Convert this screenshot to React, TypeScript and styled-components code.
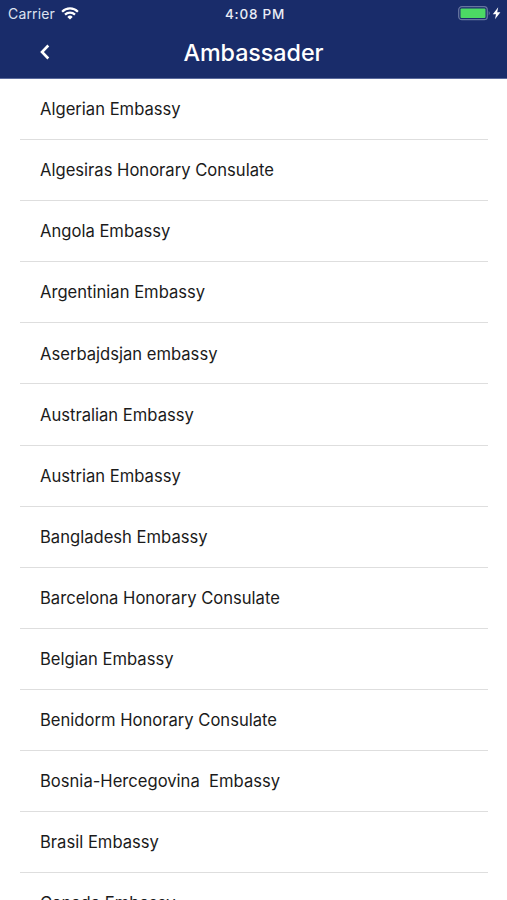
import React from "react";
import styled, { createGlobalStyle } from "styled-components";

const GlobalStyle = createGlobalStyle`
  * { box-sizing: border-box; }
  body { margin: 0; background: #fff; overflow: hidden; }
`;

const Screen = styled.main`
  width: 100%;
  height: 900px;
  overflow: hidden;
  background: #fff;
  font-family: Inter, "Liberation Sans", sans-serif;
`;

const Header = styled.header`
  height: 79px;
  background: #192c6a;
  color: #fff;
  border-bottom: 1px solid #5a6a9c;
`;

const StatusBar = styled.div`
  height: 27px;
  display: grid;
  grid-template-columns: 1fr auto 1fr;
  align-items: center;
  padding: 0 5px 0 8px;
`;

const Carrier = styled.div`
  display: flex;
  align-items: center;
  gap: 6px;
  font-size: 14px;
  letter-spacing: 0.15px;
  color: #dde2f0;
`;

const Time = styled.time`
  font-size: 13.5px;
  font-weight: 550;
  letter-spacing: 0.75px;
  color: #e9ecf6;
`;

const Power = styled.div`
  display: flex;
  justify-content: flex-end;
  align-items: center;
`;

const NavBar = styled.nav`
  height: 51px;
  display: grid;
  grid-template-columns: 90px 1fr 90px;
  align-items: center;
`;

const BackButton = styled.button`
  height: 49px;
  padding: 0 0 0 39px;
  border: 0;
  background: none;
  color: inherit;
  display: flex;
  align-items: center;
  align-self: start;
`;

const Title = styled.h1`
  margin: 0;
  text-align: center;
  font-size: 23.3px;
  line-height: 50px;
  font-weight: 550;
  letter-spacing: -0.05px;
`;

const List = styled.ul`
  list-style: none;
  margin: 0;
  padding: 0 19px 0 20px;
`;

const Row = styled.li`
  height: 61.1px;
  padding: 0.2px 0 0 20px;
  display: flex;
  align-items: center;
  border-bottom: 1px solid #dedede;
  color: #1b1b1b;
  font-size: 16.6px;
  white-space: pre;
`;

const embassies = [
  "Algerian Embassy",
  "Algesiras Honorary Consulate",
  "Angola Embassy",
  "Argentinian Embassy",
  "Aserbajdsjan embassy",
  "Australian Embassy",
  "Austrian Embassy",
  "Bangladesh Embassy",
  "Barcelona Honorary Consulate",
  "Belgian Embassy",
  "Benidorm Honorary Consulate",
  "Bosnia-Hercegovina  Embassy",
  "Brasil Embassy",
  "Canada Embassy",
];

const WifiIcon = () => (
  <svg width="18" height="14" viewBox="0 0 18 14" fill="none" stroke="#fff" strokeWidth="2.2">
    <path d="M1.100 4.700a11.200 11.200 0 0 1 15.800 0M4 7.600a7.100 7.100 0 0 1 10 0" />
    <path d="M6.300 9.900a3.900 3.900 0 0 1 5.400 0L9 12.600z" fill="#fff" stroke="none" />
  </svg>
);

const BatteryIcon = () => (
  <svg width="44" height="15" viewBox="0 0 44 15">
    <rect x=".700" y=".700" width="28.600" height="13" rx="3.200" fill="none" stroke="#66749f" strokeWidth="1.300" />
    <rect x="2.500" y="2.500" width="25" height="9.500" rx="1" fill="#4cd964" />
    <path d="M30.700 5q2.200 2.200 0 4.400z" fill="#66749f" />
    <path d="M40.200 1.200l-5.400 7h3.200l-1 5 5.400-7h-3.200z" fill="#fff" />
  </svg>
);

const ChevronIcon = () => (
  <svg width="12" height="16" viewBox="0 0 12 16" fill="none" stroke="#fff" strokeWidth="2.600">
    <path d="M9.300 1.500L3 8l6.300 6.500" />
  </svg>
);

export default function App() {
  return (
    <Screen>
      <GlobalStyle />
      <Header>
        <StatusBar>
          <Carrier>
            Carrier
            <WifiIcon />
          </Carrier>
          <Time>4:08 PM</Time>
          <Power>
            <BatteryIcon />
          </Power>
        </StatusBar>
        <NavBar>
          <BackButton aria-label="Back">
            <ChevronIcon />
          </BackButton>
          <Title>Ambassader</Title>
        </NavBar>
      </Header>
      <List>
        {embassies.map((name) => (
          <Row key={name}>{name}</Row>
        ))}
      </List>
    </Screen>
  );
}
